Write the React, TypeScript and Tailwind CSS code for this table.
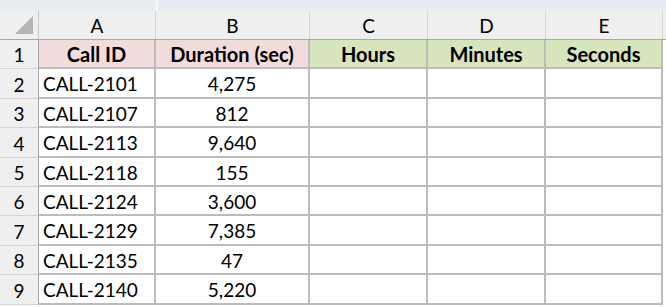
import React from "react";

const rows: { n: number; id: string; dur: string; h: string }[] = [
  { n: 2, id: "CALL-2101", dur: "4,275", h: "h-[30px]" },
  { n: 3, id: "CALL-2107", dur: "812", h: "h-[29px]" },
  { n: 4, id: "CALL-2113", dur: "9,640", h: "h-[30px]" },
  { n: 5, id: "CALL-2118", dur: "155", h: "h-[29px]" },
  { n: 6, id: "CALL-2124", dur: "3,600", h: "h-[29px]" },
  { n: 7, id: "CALL-2129", dur: "7,385", h: "h-[30px]" },
  { n: 8, id: "CALL-2135", dur: "47", h: "h-[29px]" },
  { n: 9, id: "CALL-2140", dur: "5,220", h: "h-[30px]" },
];

const font = { fontFamily: "Lato, 'Open Sans', sans-serif" };

export default function App() {
  return (
    <div className="w-[666px] h-[307px] overflow-hidden bg-white text-[19px] leading-none text-black" style={font}>
      <div className="h-[11px] flex">
        <div className="w-[156px] bg-[#e8edf2]" />
        <div className="w-[2px] bg-[#f4f6f8]" />
        <div className="flex-1 bg-[#e6ecf2]" />
      </div>
      {/* column headers */}
      <div className="flex h-[29px] bg-[#efefef] border-b border-[#a8a8a8]">
        <div className="w-[39px] border-r border-[#c8c8c8] relative">
          <div className="absolute right-[5px] bottom-[5px] w-0 h-0 border-l-[18px] border-l-transparent border-b-[18px] border-b-[#b4b4b4]" />
        </div>
        <div className="w-[117px] border-r border-[#d4d4d4] flex items-center justify-center pt-[1px]">A</div>
        <div className="w-[154px] border-r border-[#d4d4d4] flex items-center justify-center pt-[1px]">B</div>
        <div className="w-[118px] border-r border-[#d4d4d4] flex items-center justify-center pt-[1px]">C</div>
        <div className="w-[118px] border-r border-[#d4d4d4] flex items-center justify-center pt-[1px]">D</div>
        <div className="w-[117px] border-r border-[#d4d4d4] flex items-center justify-center pt-[1px]">E</div>
        <div className="flex-1" />
      </div>
      {/* row 1 */}
      <div className="flex h-[29px]">
        <div className="w-[39px] bg-[#efefef] border-r border-[#a8a8a8] border-b border-b-[#d4d4d4] flex items-center justify-center pt-[1px]">1</div>
        <div className="w-[117px] bg-[#f2dcdb] border-r-2 border-b-2 border-[#bcbcbc] flex items-center justify-center font-bold text-[20px] pt-[1px]">Call ID</div>
        <div className="w-[154px] bg-[#f2dcdb] border-r-2 border-b-2 border-[#bcbcbc] flex items-center justify-center font-bold text-[20px] pt-[1px]">Duration (sec)</div>
        <div className="w-[118px] bg-[#d8e4bc] border-r-2 border-b-2 border-[#bcbcbc] flex items-center justify-center font-bold text-[20px] pt-[1px]">Hours</div>
        <div className="w-[118px] bg-[#d8e4bc] border-r-2 border-b-2 border-[#bcbcbc] flex items-center justify-center font-bold text-[20px] pt-[1px]">Minutes</div>
        <div className="w-[117px] bg-[#d8e4bc] border-r-2 border-b-2 border-[#bcbcbc] flex items-center justify-center font-bold text-[20px] pt-[1px]">Seconds</div>
        <div className="flex-1" />
      </div>
      {rows.map((r) => (
        <div key={r.n} className={`flex ${r.h}`}>
          <div className="w-[39px] bg-[#efefef] border-r border-[#a8a8a8] border-b border-b-[#d4d4d4] flex items-center justify-center pt-[1px]">{r.n}</div>
          <div className="w-[117px] border-r-2 border-b-2 border-[#bcbcbc] flex items-center pl-[4px] pt-[1px]">{r.id}</div>
          <div className="w-[154px] border-r-2 border-b-2 border-[#bcbcbc] flex items-center justify-center pt-[1px]">{r.dur}</div>
          <div className="w-[118px] border-r-2 border-b-2 border-[#bcbcbc]" />
          <div className="w-[118px] border-r-2 border-b-2 border-[#bcbcbc]" />
          <div className="w-[117px] border-r-2 border-b-2 border-[#bcbcbc]" />
          <div className="flex-1" />
        </div>
      ))}
    </div>
  );
}
